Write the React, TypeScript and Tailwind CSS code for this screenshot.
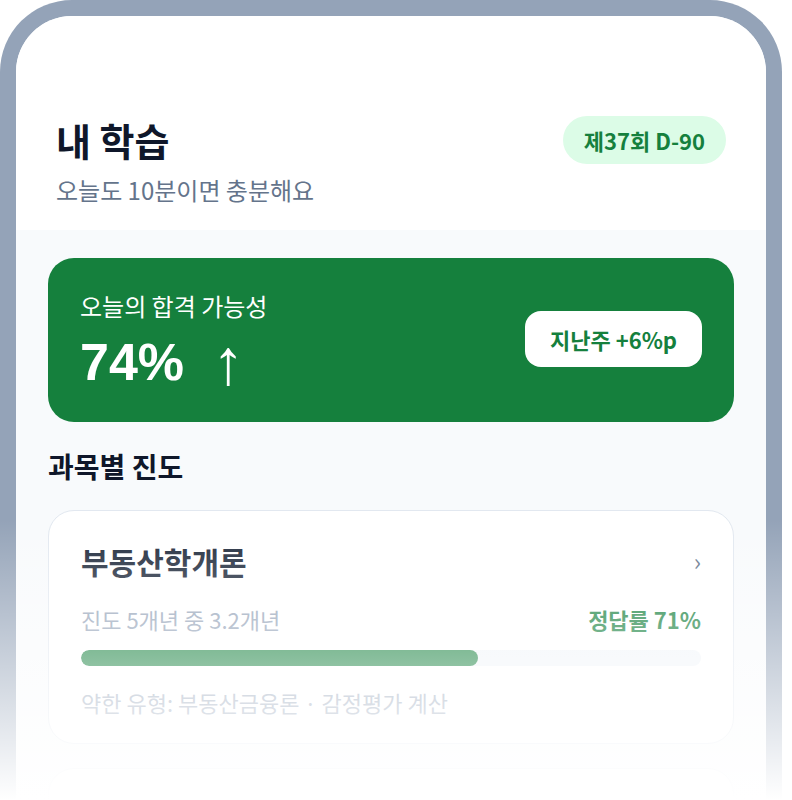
import React from "react"

const subjects = [
  {
    name: "부동산학개론",
    progress: "진도 5개년 중 3.2개년",
    done: 3.2,
    total: 5,
    rate: 71,
    weak: "약한 유형: 부동산금융론 · 감정평가 계산",
  },
  {
    name: "민법 및 민사특별법",
    progress: "진도 5개년 중 2.1개년",
    done: 2.1,
    total: 5,
    rate: 64,
    weak: "약한 유형: 물권법 · 계약법",
  },
]

const SubjectCard = ({ item }: { item: (typeof subjects)[number] }) => {
  const pct = (item.done / item.total) * 100

  return (
    <div className="rounded-[26px] border border-[#e2e8f0] bg-white px-8 pt-[30px] pb-[26px]">
      <div className="flex items-center justify-between">
        <h3 className="text-[30px] leading-10 font-bold text-[#1e293b]">
          {item.name}
        </h3>
        <span className="text-2xl leading-10 text-[#64748b]">›</span>
      </div>
      <div className="mt-[23px] flex items-center justify-between text-[22px] leading-[30px]">
        <p className="text-[#94a3b8]">{item.progress}</p>
        <p className="font-bold text-[#15803d]">정답률 {item.rate}%</p>
      </div>
      <div className="mt-4 h-4 w-full overflow-hidden rounded-full bg-[#f1f5f9]">
        <div
          className="h-full rounded-full bg-[#15803d]"
          style={{ width: `${pct}%` }}
        />
      </div>
      <p className="mt-[21px] text-[22px] leading-[30px] text-[#94a3b8]">
        {item.weak}
      </p>
    </div>
  )
}

const App = () => {
  return (
    <div className="relative h-[800px] w-[792px] overflow-hidden bg-white font-['Noto_Sans_CJK_KR','Noto_Sans',sans-serif]">
      <div className="h-[900px] w-[782px] overflow-hidden rounded-t-[72px] border-[16px] border-b-0 border-[#94a3b8] bg-[#f8fafc]">
        <header className="bg-white px-10 pt-[100px] pb-6">
          <div className="flex items-center justify-between">
            <h1 className="text-[38px] leading-[48px] font-bold text-[#0f172a]">
              내 학습
            </h1>
            <span className="flex h-12 items-center rounded-full bg-[#dcfce7] px-[21px] text-[22px] font-bold text-[#15803d]">
              제37회 D-90
            </span>
          </div>
          <p className="mt-2.5 text-2xl leading-8 text-[#64748b]">
            오늘도 10분이면 충분해요
          </p>
        </header>

        <main className="px-8 pt-7">
          <section className="flex items-center justify-between rounded-[26px] bg-[#15803d] px-8 pt-8 pb-[34px] text-white">
            <div>
              <p className="text-2xl leading-8">오늘의 합격 가능성</p>
              <div className="mt-3.5 flex h-[52px] items-center font-['Liberation_Sans',Arial,sans-serif] text-[52px] leading-[52px] font-bold">
                <span>74%</span>
                <span className="ml-[28px] text-[64px] leading-[52px]">↑</span>
              </div>
            </div>
            <span className="rounded-2xl bg-white px-[25px] py-[14px] text-[22px] leading-7 font-bold text-[#15803d]">
              지난주 +6%p
            </span>
          </section>

          <h2 className="mt-[26px] text-[28px] leading-9 font-bold text-[#0f172a]">
            과목별 진도
          </h2>

          <div className="mt-[26px] flex flex-col gap-6">
            {subjects.map((s) => (
              <SubjectCard key={s.name} item={s} />
            ))}
          </div>
        </main>
      </div>

      <div className="pointer-events-none absolute inset-x-0 top-[520px] h-[280px] bg-linear-to-b from-white/0 to-white" />
    </div>
  )
}

export default App
